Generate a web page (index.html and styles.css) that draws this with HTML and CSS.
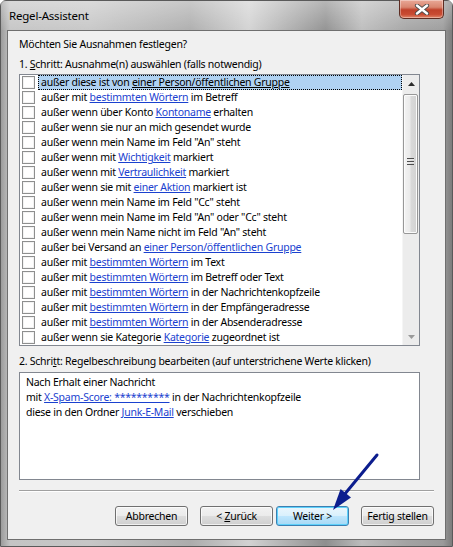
FILE: index.html
```html
<!DOCTYPE html>
<html lang="de">
<head>
<meta charset="utf-8">
<title>Regel-Assistent</title>
<link rel="stylesheet" href="styles.css">
</head>
<body>
<div class="window">
  <div class="titlebar">
    <span class="title">Regel-Assistent</span>
    <div class="close">
      <svg width="16" height="11" viewBox="0 0 16 11"><path d="M3 1.5 L13 9.5 M13 1.5 L3 9.5" stroke="#4a4a4a" stroke-width="4.2" stroke-linecap="round"/><path d="M3 1.5 L13 9.5 M13 1.5 L3 9.5" stroke="#ffffff" stroke-width="2.4" stroke-linecap="round"/></svg>
    </div>
  </div>
  <div class="panel">
    <div class="heading">Möchten Sie Ausnahmen festlegen?</div>
    <div class="label">1. <u>S</u>chritt: Ausnahme(n) auswählen (falls notwendig)</div>
    <div class="listbox">
      <div class="rows">
        <div class="row"><span class="cb"></span><span class="txt sel">außer diese ist von <u>einer Person/öffentlichen Gruppe</u></span></div>
        <div class="row"><span class="cb"></span><span class="txt">außer mit <a>bestimmten Wörtern</a> im Betreff</span></div>
        <div class="row"><span class="cb"></span><span class="txt">außer wenn über Konto <a>Kontoname</a> erhalten</span></div>
        <div class="row"><span class="cb"></span><span class="txt">außer wenn sie nur an mich gesendet wurde</span></div>
        <div class="row"><span class="cb"></span><span class="txt">außer wenn mein Name im Feld "An" steht</span></div>
        <div class="row"><span class="cb"></span><span class="txt">außer wenn mit <a>Wichtigkeit</a> markiert</span></div>
        <div class="row"><span class="cb"></span><span class="txt">außer wenn mit <a>Vertraulichkeit</a> markiert</span></div>
        <div class="row"><span class="cb"></span><span class="txt">außer wenn sie mit <a>einer Aktion</a> markiert ist</span></div>
        <div class="row"><span class="cb"></span><span class="txt">außer wenn mein Name im Feld "Cc" steht</span></div>
        <div class="row"><span class="cb"></span><span class="txt">außer wenn mein Name im Feld "An" oder "Cc" steht</span></div>
        <div class="row"><span class="cb"></span><span class="txt">außer wenn mein Name nicht im Feld "An" steht</span></div>
        <div class="row"><span class="cb"></span><span class="txt">außer bei Versand an <a>einer Person/öffentlichen Gruppe</a></span></div>
        <div class="row"><span class="cb"></span><span class="txt">außer mit <a>bestimmten Wörtern</a> im Text</span></div>
        <div class="row"><span class="cb"></span><span class="txt">außer mit <a>bestimmten Wörtern</a> im Betreff oder Text</span></div>
        <div class="row"><span class="cb"></span><span class="txt">außer mit <a>bestimmten Wörtern</a> in der Nachrichtenkopfzeile</span></div>
        <div class="row"><span class="cb"></span><span class="txt">außer mit <a>bestimmten Wörtern</a> in der Empfängeradresse</span></div>
        <div class="row"><span class="cb"></span><span class="txt">außer mit <a>bestimmten Wörtern</a> in der Absenderadresse</span></div>
        <div class="row"><span class="cb"></span><span class="txt">außer wenn sie Kategorie <a>Kategorie</a> zugeordnet ist</span></div>
      </div>
      <div class="scrollbar">
        <div class="sbtn"><svg width="7" height="4" viewBox="0 0 7 4"><path d="M0 4 L3.5 0 L7 4 Z" fill="#2b2b2b"/></svg></div>
        <div class="track">
          <div class="thumb"><span class="grip"></span></div>
        </div>
        <div class="sbtn"><svg width="7" height="4" viewBox="0 0 7 4"><path d="M0 0 L3.5 4 L7 0 Z" fill="#9a9a9a"/></svg></div>
      </div>
    </div>
    <div class="label label2">2. Schri<u>t</u>t: Regelbeschreibung bearbeiten (auf unterstrichene Werte klicken)</div>
    <div class="desc">
      <div>Nach Erhalt einer Nachricht</div>
      <div>mit <a>X-Spam-Score: **********</a> in der Nachrichtenkopfzeile</div>
      <div>diese in den Ordner <a>Junk-E-Mail</a> verschieben</div>
    </div>
    <div class="sep"></div>
    <div class="buttons">
      <button class="btn">Abbrechen</button>
      <button class="btn gap">&lt; <u>Z</u>urück</button>
      <button class="btn default">Weiter &gt;</button>
      <button class="btn gap">Fertig stellen</button>
    </div>
  </div>
  <svg class="arrow" width="453" height="547" viewBox="0 0 453 547">
    <path d="M377 455 L344 495" stroke="#0c1d8e" stroke-width="3" stroke-linecap="round"/>
    <path d="M333 510 L340.6 489 L351 497.6 Z" fill="#0c1d8e"/>
  </svg>
</div>
</body>
</html>
```

FILE: styles.css
```css
* { box-sizing: border-box; }
html, body { margin: 0; padding: 0; }
body {
  width: 453px;
  height: 547px;
  overflow: hidden;
  font-family: "Noto Sans", "Open Sans", sans-serif;
  font-size: 10.5px;
  letter-spacing: -0.25px;
  color: #000;
}
.window {
  position: relative;
  width: 453px;
  height: 547px;
  display: flex;
  flex-direction: column;
  border: 1px solid #5a5a5a;
  border-radius: 6px 6px 0 0;
  background: linear-gradient(to right, #9c9c9c 0%, #c4c4c4 2%, #c6c6c6 20%, #acacac 42%, #d2d2d2 55%, #b6b6b6 62%, #8f8f8f 72%, #bcbcbc 80%, #a3a3a3 90%, #9a9a9a 98%, #7d7d7d 100%);
}
.titlebar {
  height: 29px;
  display: flex;
  justify-content: space-between;
  align-items: flex-start;
  padding-left: 8px;
  padding-right: 8px;
  background: linear-gradient(to bottom, rgba(255,255,255,0.35), rgba(255,255,255,0.05));
}
.title {
  font-size: 11.5px;
  letter-spacing: -0.2px;
  line-height: 15px;
  margin-top: 7px;
  color: #000;
}
.close {
  width: 45px;
  height: 19px;
  margin-top: -1px;
  border: 1px solid #5d2c22;
  border-top: none;
  border-radius: 0 0 5px 5px;
  background: linear-gradient(to bottom, #e9a897 0%, #d98670 40%, #c0412a 55%, #c94b32 80%, #e0866a 100%);
  display: flex;
  align-items: center;
  justify-content: center;
  box-shadow: inset 0 0 0 1px rgba(255,255,255,0.35);
}
.close svg { display: block; }
.panel {
  flex: 1;
  margin: 0 6px 6px 6px;
  border: 1px solid #6f6f6f;
  background: #f0f0f0;
  padding: 6px 10px 0 11px;
  display: flex;
  flex-direction: column;
}
.heading {
  line-height: 15px;
  height: 15px;
}
.label {
  line-height: 15px;
  height: 15px;
  margin-top: 5px;
}
u { text-decoration: underline; }
.listbox {
  margin-top: 2px;
  width: 401px;
  height: 272px;
  border: 1px solid #828790;
  background: #fff;
  display: flex;
}
.rows {
  flex: 1;
  display: flex;
  flex-direction: column;
}
.row {
  height: 15px;
  display: flex;
  align-items: center;
  padding-left: 2px;
}
.cb {
  width: 13px;
  height: 13px;
  flex: none;
  border: 1px solid #8e8f8f;
  background: #fff;
  box-shadow: inset 0 0 0 1px #f2f2f2;
  margin-right: 3px;
}
.txt {
  flex: 1;
  height: 15px;
  line-height: 13px;
  padding-left: 2px;
  border: 1px solid transparent;
  white-space: nowrap;
}
.txt.sel {
  background: #b0d2f2;
  border: 1px dotted #000;
}
a {
  color: #1a41cf;
  text-decoration: underline;
}
.scrollbar {
  width: 17px;
  flex: none;
  background: #ececec;
  display: flex;
  flex-direction: column;
  border-left: 1px solid #f5f5f5;
}
.sbtn {
  height: 17px;
  display: flex;
  align-items: center;
  justify-content: center;
}
.sbtn svg { display: block; }
.track {
  flex: 1;
  padding: 2px 1px 0 0;
}
.thumb {
  height: 140px;
  border: 1px solid #979797;
  border-radius: 2px;
  background: linear-gradient(to right, #f3f3f3 0%, #eaeaea 45%, #d9d9d9 55%, #d2d2d2 100%);
  box-shadow: inset 0 0 0 1px #fbfbfb;
  display: flex;
  align-items: center;
  justify-content: center;
}
.grip {
  width: 7px;
  height: 7px;
  margin-top: -6px;
  background: repeating-linear-gradient(to bottom, #4d4d4d 0, #4d4d4d 1px, #e8e8e8 1px, #e8e8e8 2px, transparent 2px, transparent 3px);
}
.label2 { margin-top: 8px; }
.desc {
  margin-top: 3px;
  width: 401px;
  height: 108px;
  border: 1px solid #828790;
  background: #fff;
  padding: 2px 6px;
  line-height: 15px;
}
.sep {
  margin-top: 10px;
  width: 415px;
  height: 2px;
  border-top: 1px solid #a0a0a0;
  border-bottom: 1px solid #ffffff;
}
.buttons {
  margin-top: 14px;
  width: 415px;
  display: flex;
  justify-content: flex-end;
}
.btn {
  width: 73px;
  height: 20px;
  margin: 0;
  padding: 0;
  font-family: inherit;
  font-size: 10.5px;
  letter-spacing: -0.25px;
  color: #000;
  border: 1px solid #707070;
  border-radius: 3px;
  background: linear-gradient(to bottom, #f2f2f2 0%, #ebebeb 50%, #dddddd 51%, #cfcfcf 100%);
  box-shadow: inset 0 0 0 1px rgba(255,255,255,0.7);
  margin-left: 3px;
}
.btn.gap { margin-left: 12px; }
.btn.default {
  border: 1px solid #3c7fb1;
  background: linear-gradient(to bottom, #eaf6fd 0%, #d9f0fc 50%, #bee6fd 51%, #a7d9f5 100%);
  box-shadow: inset 0 0 0 1px #5ed1fb;
}
.arrow {
  position: absolute;
  left: -1px;
  top: -1px;
  pointer-events: none;
}
```
